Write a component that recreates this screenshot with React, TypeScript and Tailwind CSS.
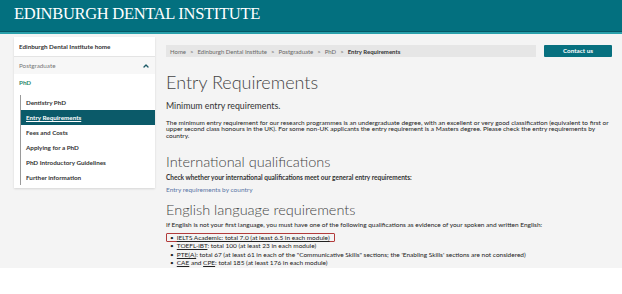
import { ChevronUp } from "lucide-react";

const subItems = [
  "Dentistry PhD",
  "Entry Requirements",
  "Fees and Costs",
  "Applying for a PhD",
  "PhD Introductory Guidelines",
  "Further information",
];

function Sidebar() {
  return (
    <aside className="w-[141px] self-start shrink-0 bg-white shadow-[0_1px_2px_rgba(0,0,0,0.12)] pb-[3px]">
      <div className="h-[20px] flex items-center px-[5px] border-b border-[#e4e4e4] text-[6.3px] font-bold text-[#333]">
        Edinburgh Dental Institute home
      </div>
      <div className="h-[17px] flex items-center justify-between px-[5px] bg-[#f7f7f7] text-[6.3px] text-[#777]">
        <span>Postgraduate</span>
        <ChevronUp className="w-[8px] h-[8px] text-[#1c5a66]" strokeWidth={4} />
      </div>
      <div className="h-[21px] flex items-center pb-[3px] px-[5px] text-[6.3px] font-bold text-[#2f8a6e]">PhD</div>
      <ul className="ml-[6px] border-l border-[#9a9a9a]">
        {subItems.map((item) => {
          const active = item === "Entry Requirements";
          return (
            <li
              key={item}
              className={
                active
                  ? "h-[15px] flex items-center pl-[5px] bg-[#0b5a69] text-white font-bold underline text-[6.3px]"
                  : "h-[15px] flex items-center pl-[5px] text-[#333] font-bold text-[6.3px]"
              }
            >
              {item}
            </li>
          );
        })}
      </ul>
    </aside>
  );
}

const crumbs = ["Home", "Edinburgh Dental Institute", "Postgraduate", "PhD"];

function Breadcrumb() {
  return (
    <div className="flex items-center gap-[8px]">
      <div className="flex-1 h-[12px] bg-[#e6e6e6] flex items-center px-[4px] text-[6px] text-[#666]">
        {crumbs.map((c) => (
          <span key={c} className="flex items-center">
            <span>{c}</span>
            <span className="mx-[4px]">&gt;</span>
          </span>
        ))}
        <span className="font-bold text-[#333]">Entry Requirements</span>
      </div>
      <button className="w-[68px] h-[12px] rounded-[1px] bg-[#07707f] text-white text-[6.3px] font-bold">
        Contact us
      </button>
    </div>
  );
}

export default function App() {
  return (
    <div className="w-[622px] h-[294px] bg-white font-['Lato','Open_Sans',sans-serif] overflow-hidden">
      <header className="h-[34px] bg-[#03707f] border-b-[2px] border-b-[#2aa0ab] shadow-[inset_0_-1px_0_#045866] flex items-center px-[14px]">
        <h1 className="text-[16.5px] text-white font-['Liberation_Serif',serif] tracking-[-0.3px] leading-none mb-[4px]">
          EDINBURGH DENTAL INSTITUTE
        </h1>
      </header>
      <div className="h-[234px] bg-[#f4f4f4] flex gap-[11px] pl-[14px] pr-[10px] pt-[3px]">
        <Sidebar />
        <main className="flex-1 pt-[8px] text-[#222]">
          <Breadcrumb />
          <h2 className="mt-[14px] text-[18px] font-light leading-[22px] text-[#444]">Entry Requirements</h2>
          <p className="mt-[8px] text-[8.8px] leading-[10px] text-[#333]">Minimum entry requirements.</p>
          <p className="mt-[8.5px] text-[6.5px] leading-[6.6px]">
            The minimum entry requirement for our research programmes is an undergraduate degree, with an excellent or very good classification (equivalent to first or upper second class honours in the UK). For some non-UK applicants the entry requirement is a Masters degree. Please check the entry requirements by country.
          </p>
          <h3 className="mt-[13.5px] text-[14.5px] font-light leading-[18px] text-[#444]">International qualifications</h3>
          <p className="mt-[3px] text-[6.5px] leading-[8px] font-bold text-[#333]">
            Check whether your international qualifications meet our general entry requirements:
          </p>
          <p className="mt-[4px] text-[6.5px] leading-[8px] text-[#5a76a6]">Entry requirements by country</p>
          <h3 className="mt-[7.5px] text-[14.5px] font-light leading-[18px] text-[#444]">English language requirements</h3>
          <p className="mt-[2px] text-[6.5px] leading-[8px]">
            If English is not your first language, you must have one of the following qualifications as evidence of your spoken and written English:
          </p>
          <ul className="mt-[4px] text-[6.5px] leading-[8.5px]">
            <li className="flex items-center w-[169px] h-[9px] border border-[#b23b3b] rounded-[1px] pl-[3px]">
              <span className="mr-[3px]">•</span>
              <span className="underline">IELTS Academic: total 7.0 (at least 6.5 in each module)</span>
            </li>
            <li className="flex items-center pl-[4px]">
              <span className="mr-[3px]">•</span>
              <span><span className="underline">TOEFL-iBT</span>: total 100 (at least 23 in each module)</span>
            </li>
            <li className="flex items-center pl-[4px]">
              <span className="mr-[3px]">•</span>
              <span><span className="underline">PTE(A)</span>: total 67 (at least 61 in each of the "Communicative Skills" sections; the 'Enabling Skills' sections are not considered)</span>
            </li>
            <li className="flex items-center pl-[4px]">
              <span className="mr-[3px]">•</span>
              <span><span className="underline">CAE</span> and <span className="underline">CPE</span>: total 185 (at least 176 in each module)</span>
            </li>
          </ul>
        </main>
      </div>
    </div>
  );
}
